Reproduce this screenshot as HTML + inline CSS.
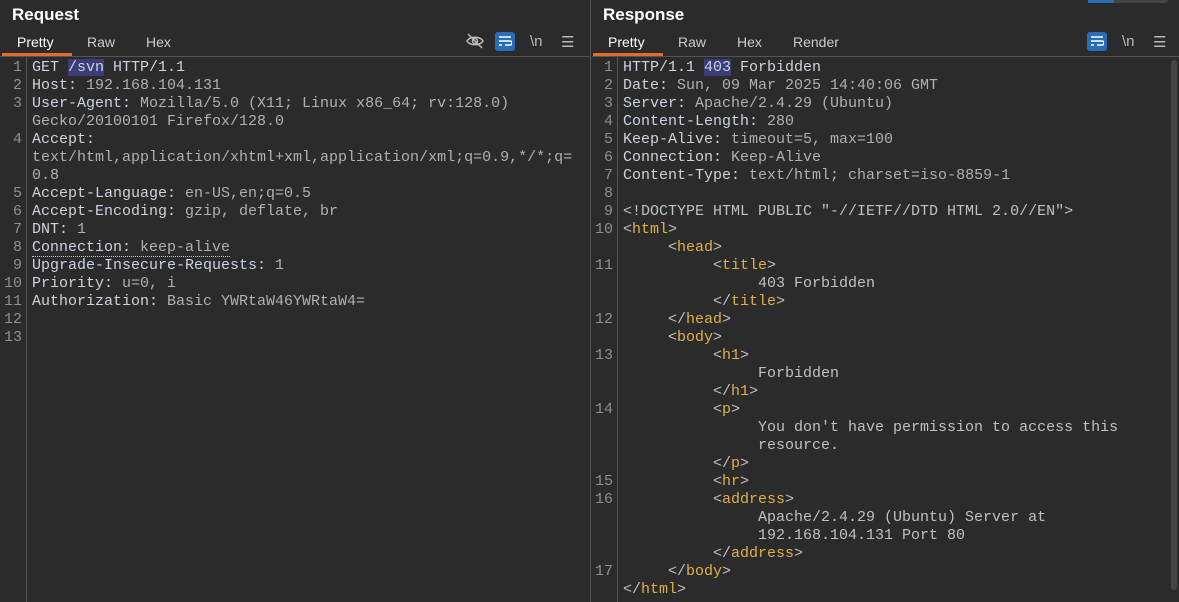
<!DOCTYPE html>
<html><head><style>
body{margin:0;width:1179px;height:602px;background:#2b2b2b;overflow:hidden;font-family:"Liberation Sans",sans-serif;position:relative}
.t{position:absolute;color:#fff;font-weight:bold;font-size:17px;top:5px}
.tab{position:absolute;top:34px;font-size:14px;color:#ccc}
.ul{position:absolute;top:53px;height:3px;background:#e06c30}
.sep{position:absolute;top:56px;height:1px;background:#555}
.code{position:absolute;top:59px;font-family:"Liberation Mono",monospace;font-size:15px;line-height:18px;color:#ccd3de;white-space:pre}
.num{position:absolute;top:59px;font-family:"Liberation Mono",monospace;font-size:15px;line-height:18px;color:#8a9099;text-align:right;white-space:pre}
.v{color:#b0b0b0}
.g{color:#c0c0c0}
.k{color:#e0b048}
.hl{background:#3c3c7a}
.btn{position:absolute;top:32px;width:20px;height:19px;background:#2a6db5;border-radius:3px}
.ic{position:absolute;top:33px;color:#bbb;font-size:15px}
</style></head><body>
<div class="t" style="left:12px">Request</div>
<div class="t" style="left:603px">Response</div>
<div style="position:absolute;left:1088px;top:0;width:80px;height:3px;background:#444;border-radius:0 0 3px 3px"></div>
<div style="position:absolute;left:1088px;top:0;width:26px;height:3px;background:#2a6db5"></div>
<div class="tab" style="left:17px;color:#fff">Pretty</div>
<div class="tab" style="left:87px">Raw</div>
<div class="tab" style="left:146px">Hex</div>
<div class="tab" style="left:608px;color:#fff">Pretty</div>
<div class="tab" style="left:678px">Raw</div>
<div class="tab" style="left:737px">Hex</div>
<div class="tab" style="left:793px">Render</div>
<div class="ul" style="left:2px;width:70px"></div>
<div class="ul" style="left:593px;width:70px"></div>
<div class="sep" style="left:0;width:589px"></div>
<div class="sep" style="left:592px;width:587px"></div>
<svg style="position:absolute;left:465px;top:32px" width="20" height="18" viewBox="0 0 20 18"><path d="M2 9c3-5 13-5 16 0c-3 5-13 5-16 0z" fill="none" stroke="#bbb" stroke-width="1.5"/><circle cx="10" cy="9" r="2.5" fill="none" stroke="#bbb" stroke-width="1.5"/><path d="M3 2l14 14" stroke="#bbb" stroke-width="1.5"/></svg>
<div class="btn" style="left:495px"></div>
<div class="btn" style="left:1087px"></div>
<svg style="position:absolute;left:498px;top:35px" width="14" height="13"><path d="M1 2h12M1 6h11a2 2 0 0 1 0 4H7M1 10h3" stroke="#fff" stroke-width="1.5" fill="none"/></svg>
<svg style="position:absolute;left:1090px;top:35px" width="14" height="13"><path d="M1 2h12M1 6h11a2 2 0 0 1 0 4H7M1 10h3" stroke="#fff" stroke-width="1.5" fill="none"/></svg>
<div class="ic" style="left:530px">\n</div>
<div class="ic" style="left:561px">☰</div>
<div class="ic" style="left:1122px">\n</div>
<div class="ic" style="left:1153px">☰</div>
<div style="position:absolute;left:26px;top:57px;width:1px;height:545px;background:#555"></div>
<div style="position:absolute;left:590px;top:0;width:1px;height:602px;background:#555"></div>
<div style="position:absolute;left:617px;top:57px;width:1px;height:545px;background:#555"></div>
<div style="position:absolute;left:1171px;top:60px;width:6px;height:530px;background:#444;border-radius:3px"></div>
<div class="num" style="left:0;width:22px">1
2
3

4


5
6
7
8
9
10
11
12
13</div>
<div class="code" style="left:32px">GET <span class="hl">/svn</span> HTTP/1.1
Host: <span class="v">192.168.104.131</span>
User-Agent: <span class="v">Mozilla/5.0 (X11; Linux x86_64; rv:128.0)</span>
<span class="v">Gecko/20100101 Firefox/128.0</span>
Accept:
<span class="v">text/html,application/xhtml+xml,application/xml;q=0.9,*/*;q=</span>
<span class="v">0.8</span>
Accept-Language: <span class="v">en-US,en;q=0.5</span>
Accept-Encoding: <span class="v">gzip, deflate, br</span>
DNT: <span class="v">1</span>
<span style="border-bottom:1px dotted #ccc">Connection: <span class="v">keep-alive</span></span>
Upgrade-Insecure-Requests: <span class="v">1</span>
Priority: <span class="v">u=0, i</span>
Authorization: <span class="v">Basic YWRtaW46YWRtaW4=</span></div>
<div class="num" style="left:592px;width:21px">1
2
3
4
5
6
7
8
9
10

11


12

13


14



15
16



17</div>
<div class="code" style="left:623px">HTTP/1.1 <span class="hl">403</span> Forbidden
Date: <span class="v">Sun, 09 Mar 2025 14:40:06 GMT</span>
Server: <span class="v">Apache/2.4.29 (Ubuntu)</span>
Content-Length: <span class="v">280</span>
Keep-Alive: <span class="v">timeout=5, max=100</span>
Connection: <span class="v">Keep-Alive</span>
Content-Type: <span class="v">text/html; charset=iso-8859-1</span>

<span class="g">&lt;!DOCTYPE HTML PUBLIC "-//IETF//DTD HTML 2.0//EN"&gt;</span>
<span class="g">&lt;<span class="k">html</span>&gt;</span>
<span class="g">     &lt;<span class="k">head</span>&gt;</span>
<span class="g">          &lt;<span class="k">title</span>&gt;</span>
<span class="g">               403 Forbidden</span>
<span class="g">          &lt;/<span class="k">title</span>&gt;</span>
<span class="g">     &lt;/<span class="k">head</span>&gt;</span>
<span class="g">     &lt;<span class="k">body</span>&gt;</span>
<span class="g">          &lt;<span class="k">h1</span>&gt;</span>
<span class="g">               Forbidden</span>
<span class="g">          &lt;/<span class="k">h1</span>&gt;</span>
<span class="g">          &lt;<span class="k">p</span>&gt;</span>
<span class="g">               You don't have permission to access this</span>
<span class="g">               resource.</span>
<span class="g">          &lt;/<span class="k">p</span>&gt;</span>
<span class="g">          &lt;<span class="k">hr</span>&gt;</span>
<span class="g">          &lt;<span class="k">address</span>&gt;</span>
<span class="g">               Apache/2.4.29 (Ubuntu) Server at</span>
<span class="g">               192.168.104.131 Port 80</span>
<span class="g">          &lt;/<span class="k">address</span>&gt;</span>
<span class="g">     &lt;/<span class="k">body</span>&gt;</span>
<span class="g">&lt;/<span class="k">html</span>&gt;</span></div>
</body></html>
